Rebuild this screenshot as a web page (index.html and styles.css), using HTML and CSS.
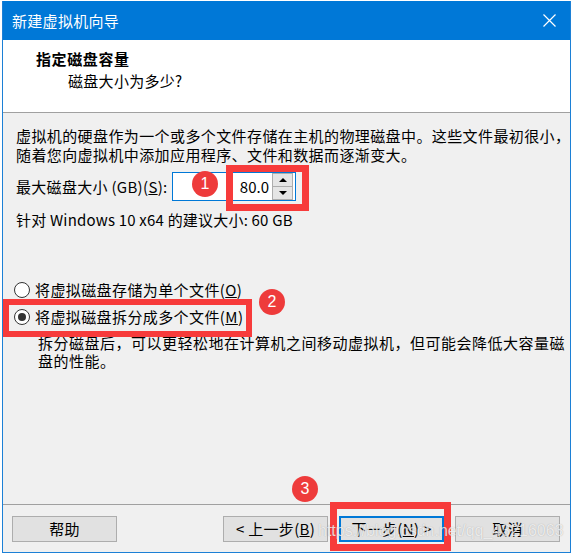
FILE: index.html
```html
<!DOCTYPE html>
<html>
<head>
    <title>新建虚拟机向导</title>
    <link rel="stylesheet" href="styles.css">
</head>
<body>

    <div class="window">
        <div class="titlebar">
            <span class="title-text">新建虚拟机向导</span>
            <svg class="close" width="13" height="13" viewBox="0 0 13 13">
                <path d="M0.5 0.5 L12.5 12.5 M12.5 0.5 L0.5 12.5" stroke="#fff" stroke-width="1.2" fill="none"/>
            </svg>
        </div>

        <div class="header">
            <div class="h-title">指定磁盘容量</div>
            <div class="h-sub">磁盘大小为多少?</div>
        </div>

        <div class="content">
            <p class="intro">虚拟机的硬盘作为一个或多个文件存储在主机的物理磁盘中。这些文件最初很小，<br>随着您向虚拟机中添加应用程序、文件和数据而逐渐变大。</p>

            <div class="size-row">
                <label class="size-label">最大磁盘大小 (GB)(<u>S</u>):</label>
                <div class="spin">
                    <span class="spin-value">80.0</span>
                    <div class="spin-btns">
                        <div class="spin-btn"><span class="arrow-up"></span></div>
                        <div class="spin-btn"><span class="arrow-down"></span></div>
                    </div>
                </div>
            </div>

            <p class="hint">针对 Windows 10 x64 的建议大小: 60 GB</p>

            <div class="options">
                <div class="radio"><span class="dot"></span>将虚拟磁盘存储为单个文件(<u>O</u>)</div>
                <div class="radio checked"><span class="dot"></span>将虚拟磁盘拆分成多个文件(<u>M</u>)</div>
                <p class="desc">拆分磁盘后，可以更轻松地在计算机之间移动虚拟机，但可能会降低大容量磁<br>盘的性能。</p>
            </div>
        </div>

        <div class="footer">
            <button class="btn">帮助</button>
            <div class="spacer"></div>
            <button class="btn">&lt; 上一步(<u>B</u>)</button>
            <button class="btn default">下一步(<u>N</u>) &gt;</button>
            <button class="btn">取消</button>
        </div>
    </div>

    <!-- annotations drawn over the screenshot -->
    <div class="mark box1"></div>
    <div class="mark box2"></div>
    <div class="mark box3"></div>
    <div class="num n1">1</div>
    <div class="num n2">2</div>
    <div class="num n3">3</div>
    <div class="watermark">https://blog.csdn.net/qq_43216063</div>

</body>
</html>
```

FILE: styles.css
```css
body {
  margin: 0;
  background-color: #fff;
  font-family: "Microsoft YaHei UI", "Noto Sans CJK SC", sans-serif;
  font-size: 15px;
  color: #000;
  position: relative;
  width: 573px;
  height: 557px;
  overflow: hidden;
}

.window {
  box-sizing: border-box;
  margin: 1px 0 0 2px;
  width: 569px;
  height: 552px;
  border: 1px solid #1c80d6;
  border-top: 0;
  background-color: #f0f0f0;
  display: flex;
  flex-direction: column;
}

.titlebar {
  height: 39px;
  background-color: #0078d7;
  color: #fff;
  display: flex;
  align-items: center;
  padding-left: 9px;
  padding-right: 14px;
  flex-shrink: 0;
}

.title-text {
  flex: 1;
  font-size: 15px;
  letter-spacing: 0.3px;
  line-height: 20px;
}

.close {
  display: block;
}

.header {
  box-sizing: border-box;
  background-color: #fff;
  height: 73px;
  border-bottom: 1px solid #a0a0a0;
  padding: 9px 0 0 33px;
  flex-shrink: 0;
}

.h-title {
  font-weight: bold;
  line-height: 20px;
  letter-spacing: 0.6px;
}

.h-sub {
  margin-top: 2px;
  padding-left: 32px;
  line-height: 20px;
  letter-spacing: 0.3px;
}

.content {
  flex: 1;
  padding: 13px 0 0 13px;
  border-bottom: 1px solid #a0a0a0;
}

.intro {
  margin: 0;
  line-height: 19px;
  letter-spacing: 0.4px;
  white-space: nowrap;
}

.size-row {
  display: flex;
  align-items: center;
  margin-top: 8px;
}

.size-label {
  width: 156px;
  letter-spacing: 0.3px;
}

.spin {
  box-sizing: border-box;
  width: 124px;
  height: 29px;
  border: 1px solid #0078d7;
  background-color: #fff;
  display: flex;
  align-items: center;
  justify-content: flex-end;
  padding: 0 2px 0 0;
}

.spin-value {
  margin-right: 3px;
  line-height: 20px;
}

.spin-btns {
  box-sizing: border-box;
  width: 21px;
  height: 27px;
  border: 1px solid #adadad;
  display: flex;
  flex-direction: column;
}

.spin-btn {
  flex: 1;
  background-color: #e5e5e5;
  display: flex;
  align-items: center;
  justify-content: center;
}

.spin-btn + .spin-btn {
  border-top: 1px solid #adadad;
}

.arrow-up {
  width: 0;
  height: 0;
  border-left: 4px solid transparent;
  border-right: 4px solid transparent;
  border-bottom: 4px solid #000;
}

.arrow-down {
  width: 0;
  height: 0;
  border-left: 4px solid transparent;
  border-right: 4px solid transparent;
  border-top: 4px solid #000;
}

.hint {
  margin: 10px 0 0;
  line-height: 18px;
  letter-spacing: 0.2px;
}

.options {
  margin-top: 47px;
}

.radio {
  display: flex;
  align-items: center;
  height: 27px;
  margin-left: -2px;
  letter-spacing: 0.4px;
}

.dot {
  box-sizing: border-box;
  width: 16px;
  height: 16px;
  border: 1px solid #333;
  border-radius: 50%;
  background-color: #fff;
  margin-right: 5px;
  display: flex;
  align-items: center;
  justify-content: center;
}

.checked .dot::after {
  content: "";
  width: 8px;
  height: 8px;
  border-radius: 50%;
  background-color: #333;
}

.desc {
  margin: 4px 0 0;
  padding-left: 22px;
  line-height: 18px;
  letter-spacing: 0.5px;
  white-space: nowrap;
}

.footer {
  height: 36px;
  padding: 11px 10px 0 9px;
  display: flex;
  align-items: flex-start;
  gap: 11px;
  flex-shrink: 0;
}

.spacer {
  flex: 1;
}

.btn {
  box-sizing: border-box;
  width: 105px;
  height: 26px;
  border: 1px solid #adadad;
  background-color: #e1e1e1;
  font-family: inherit;
  font-size: 15px;
  color: #000;
  padding: 0;
  line-height: 20px;
  letter-spacing: 0.3px;
}

.btn.default {
  border: 2px solid #0078d7;
}

.mark {
  position: absolute;
  box-sizing: border-box;
  border: 7px solid #f73b3b;
}

.box1 {
  left: 226px;
  top: 165px;
  width: 83px;
  height: 46px;
}

.box2 {
  left: 3px;
  top: 299px;
  width: 249px;
  height: 38px;
  border-width: 6px;
}

.box3 {
  left: 330px;
  top: 502px;
  width: 121px;
  height: 49px;
}

.num {
  position: absolute;
  width: 26px;
  height: 26px;
  border-radius: 50%;
  background-color: #ee3b3b;
  color: #fff;
  font-family: "Liberation Sans", sans-serif;
  font-size: 16px;
  line-height: 26px;
  text-align: center;
}

.n1 {
  left: 192px;
  top: 171px;
}

.n2 {
  left: 259px;
  top: 289px;
}

.n3 {
  left: 292px;
  top: 476px;
}

.watermark {
  position: absolute;
  left: 318px;
  top: 521px;
  font-family: "Liberation Sans", sans-serif;
  font-size: 16px;
  line-height: 20px;
  color: rgba(255, 255, 255, 0.75);
  text-shadow: 0 0 1px rgba(90, 90, 90, 0.45);
  white-space: nowrap;
}
```
